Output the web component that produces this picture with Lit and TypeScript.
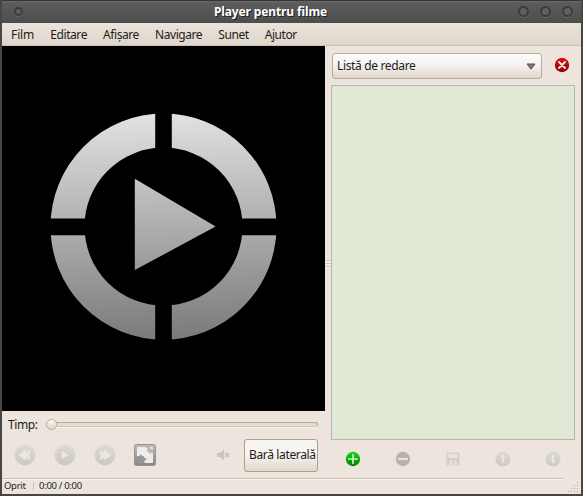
import { LitElement, html, css, svg } from "lit";
import { customElement } from "lit/decorators.js";

const disc = (id: string, glyph: unknown, size = 22) => html`
  <svg width=${size} height=${size} viewBox="0 0 22 22">
    <defs>
      <linearGradient id=${id} x1="0" y1="0" x2="0" y2="1">
        <stop offset="0" stop-color="#dedad4" /><stop offset="1" stop-color="#cbc8c1" />
      </linearGradient>
    </defs>
    <circle cx="11" cy="11" r="10.4" fill="url(#${id})" />
    ${glyph}
  </svg>`;

@customElement("app-root")
export class AppRoot extends LitElement {
  static styles = css`
    :host { display: block; width: 583px; height: 496px; font: 12px/18px "Noto Sans", "Open Sans", sans-serif; color: #1c1c1c; }
    * { box-sizing: border-box; }
    svg { display: block; flex: none; }
    .window { width: 583px; height: 496px; display: flex; flex-direction: column; background: #ece4dd; border: 2px solid #474645; border-top: 0; overflow: hidden; position: relative; white-space: nowrap; }
    .title { height: 23px; flex: none; display: grid; grid-template-columns: 38px 1fr 80px; align-items: center; background: linear-gradient(#353535 0, #353535 1px, #686868 1px, #5b5b5b 3px, #4d4d4d); color: #fff; }
    .title b { text-align: center; letter-spacing: -0.12px; text-shadow: 1px 1px 0 #222; }
    .dots { display: flex; gap: 11px; padding-left: 12px; }
    .dots.end { padding: 0 8px 0 0; justify-content: flex-end; }
    .dot { width: 11px; height: 11px; border-radius: 50%; border: 2px solid #3b3b3b; background: #606060; box-shadow: 0 1px 0 #686868; }
    .dot.small { width: 9px; height: 9px; }
    .menu { height: 23px; flex: none; display: flex; gap: 16px; padding: 3px 0 0 9px; background: linear-gradient(#eae3da, #dfd7cb); border-bottom: 1px solid #c9c0ad; }
    .menu span { letter-spacing: -0.42px; }
    .menu span:first-child { letter-spacing: -0.1px; }
    .body { display: flex; height: 432px; flex: none; }
    .left { width: 323px; display: flex; flex-direction: column; }
    .video { height: 365px; background: #000; }
    .seek { height: 27px; display: flex; align-items: center; padding-left: 6px; }
    .seek span { width: 38px; letter-spacing: -0.4px; }
    .track { width: 272px; height: 5px; border: 1px solid #b5ab9b; border-bottom-color: #cfc7b8; border-radius: 3px; background: #e4dcd1; box-shadow: 0 1px 0 #f6f1ea; display: flex; align-items: center; }
    .knob { width: 11px; height: 11px; flex: none; margin-left: -1px; border: 1px solid #b6ad9d; border-radius: 50%; background: linear-gradient(#fbf8f5, #ded6cb); }
    .controls { display: flex; align-items: center; height: 34px; padding-left: 12px; }
    .controls .group { display: flex; gap: 18px; width: 203px; align-items: center; }
    .side { margin-left: 14px; width: 74px; height: 33px; border: 1px solid #aca18e; border-radius: 3px; background: linear-gradient(#f7f5f3, #f7f4f1 45%, #e0d7cc); display: flex; align-items: center; padding-left: 4px; letter-spacing: -0.36px; }
    .split { width: 6px; display: flex; flex-direction: column; justify-content: center; align-items: center; gap: 1px; padding-top: 3px; }
    .split i { width: 5px; height: 2px; background: #d0c3b5; border-bottom: 1px solid #f7f2ee; }
    .right { width: 250px; display: flex; flex-direction: column; }
    .pick { display: flex; align-items: center; padding: 7px 0 0 1px; height: 33px; }
    .pick > svg { margin-top: -2px; }
    .combo { width: 210px; height: 26px; border: 1px solid #b7ad9c; border-radius: 3px; background: linear-gradient(#fdfcfc, #f5f1ee 50%, #dfd6cc); display: flex; align-items: center; justify-content: space-between; padding: 0 5px 0 4px; margin-right: 12px; letter-spacing: -0.35px; }
    .list { margin-top: 6px; width: 244px; height: 355px; border: 1px solid #b5b7b4; background: #e0e8d6; }
    .tools { display: flex; gap: 34px; padding: 11px 0 0 14px; }
    .status { height: 16px; flex: none; width: 561px; border-top: 1px solid #c9c1b3; box-shadow: inset 0 1px 0 #f7f2ec; display: flex; align-items: center; font-size: 9.5px; line-height: 14px; letter-spacing: -0.3px; padding: 0 0 1px 2px; }
    .status span { width: 29px; letter-spacing: -0.3px; }
    .status i { width: 1px; height: 8px; background: #c9c1b4; margin-right: 5px; }
    .grip { position: absolute; right: 1px; bottom: 0; }
  `;

  private logo() {
    return html`<svg width="323" height="365" viewBox="2 46 323 365">
      <defs><linearGradient id="metal" gradientUnits="userSpaceOnUse" x1="160" y1="113" x2="166" y2="340">
        <stop offset="0" stop-color="#e2e2e2" /><stop offset="1" stop-color="#7a7a7a" />
      </linearGradient>
      <filter id="soft" color-interpolation-filters="sRGB"><feGaussianBlur stdDeviation=".7" /></filter></defs>
      <g filter="url(#soft)">
        <circle cx="163.5" cy="226.6" r="96" fill="none" stroke="url(#metal)" stroke-width="34" />
        <path d="M155.2 105h16.6v245h-16.6zM45 218.4h237v16.8H45z" fill="#000" />
        <path d="M134.8 178.8L215.6 226.6L134.8 270z" fill="url(#metal)" />
      </g>
    </svg>`;
  }

  render() {
    return html`<div class="window">
      <div class="title">
        <div class="dots"><i class="dot small"></i></div>
        <b>Player pentru filme</b>
        <div class="dots end"><i class="dot"></i><i class="dot"></i><i class="dot"></i></div>
      </div>
      <div class="menu">${["Film", "Editare", "Afișare", "Navigare", "Sunet", "Ajutor"].map((m) => html`<span>${m}</span>`)}</div>
      <div class="body">
        <div class="left">
          <div class="video">${this.logo()}</div>
          <div class="seek"><span>Timp:</span><div class="track"><i class="knob"></i></div></div>
          <div class="controls">
            <div class="group">
              ${disc("g1", svg`<path d="M4.500 11L12 5.500v3l4-2.500v3.500L14.500 11l1.500 1.500V16l-4-2.500v3z" fill="#ece6df"/>`)}
              ${disc("g2", svg`<path d="M7 5.500L16 11l-9 5.500z" fill="#ece6df" stroke="#bfbbb4" stroke-width=".6"/>`)}
              ${disc("g3", svg`<path d="M17.500 11L10 5.500v3L6 6v3.500L7.500 11 6 12.500V16l4-2.500v3z" fill="#ece6df"/>`)}
              <svg width="22" height="22" viewBox="0 0 22 22">
                <defs><linearGradient id="pz" x1="0" y1="0" x2="0" y2="1"><stop offset="0" stop-color="#bdbdbc"/><stop offset="1" stop-color="#858786"/></linearGradient></defs>
                <rect x=".5" y=".5" width="21" height="21" rx="2" fill="url(#pz)" stroke="#929392"/>
                <path d="M3 3h16v16H3z" fill="#f1ece7"/>
                <path d="M3 12h2.500l.5-1.500 2 .5-.5 1.500 2.500-.5.500 2.500 1.500-.5.500 2-2 .5V19H3z" fill="#969796"/>
                <path d="M12 3h7v6.500l-1.500-1L16.500 10l-1.500-1 .5-1.500-2.500.5-.5-1.500 1.500-1z" fill="#b5b5b4"/>
                <path d="M15 3h4v3l-2-1z" fill="#e2dfdb"/>
              </svg>
            </div>
            <svg width="13" height="12" viewBox="0 0 13 12"><path d="M0 4h3l4-3.500v11L3 8H0z" fill="#c9c5bf"/><path d="M8 4l4 4M12 4L8 8" stroke="#c9c5bf" stroke-width="1.800"/></svg>
            <div class="side">Bară laterală</div>
          </div>
        </div>
        <div class="split"><i></i><i></i><i></i></div>
        <div class="right">
          <div class="pick">
            <div class="combo">Listă de redare
              <svg width="10" height="7" viewBox="0 0 10 7"><path d="M1 1h8L5 6.200z" fill="#827d76" stroke="#55514c"/></svg>
            </div>
            <svg width="16" height="16" viewBox="0 0 16 16">
              <defs><linearGradient id="red" x1="0" y1="0" x2="0" y2="1"><stop offset="0" stop-color="#dc1414"/><stop offset="1" stop-color="#860000"/></linearGradient></defs>
              <circle cx="8" cy="8" r="7.200" fill="url(#red)"/><path d="M5 5l6 6M11 5l-6 6" stroke="#f3e6e4" stroke-width="1.900" stroke-linecap="round"/>
            </svg>
          </div>
          <div class="list"></div>
          <div class="tools">
            <svg width="16" height="16" viewBox="0 0 16 16">
              <defs><linearGradient id="green" x1="0" y1="0" x2="0" y2="1"><stop offset="0" stop-color="#12dc12"/><stop offset="1" stop-color="#067c06"/></linearGradient></defs>
              <circle cx="8" cy="8" r="7.200" fill="url(#green)"/><path d="M3.800 8h8.400M8 3.800v8.400" stroke="#d5edd0" stroke-width="1.700" stroke-linecap="round"/>
            </svg>
            <svg width="16" height="16" viewBox="0 0 16 16"><circle cx="8" cy="8" r="7.200" fill="#b9b0aa"/><path d="M3 8h10" stroke="#e7dfd8" stroke-width="2.200"/></svg>
            <svg width="16" height="16" viewBox="0 0 16 16"><path d="M1.500 1.500h12L14.500 3v11.500h-13z" fill="#d4d0c9"/><path d="M3.500 3h9v4h-9zM5 9.500h2.500V14H5zM9.500 9.500h2V14h-2z" fill="#ebe4dd"/></svg>
            ${disc("g4", svg`<path d="M11 4.500L14.500 8.500H12.500v7.500h-3V8.500H7.500z" fill="#ece6df"/>`, 16)}
            ${disc("g5", svg`<path d="M11 17.500L14.500 13.500H12.500V6h-3v7.500H7.500z" fill="#ece6df"/>`, 16)}
          </div>
        </div>
      </div>
      <div class="status"><span>Oprit</span><i></i>0:00 / 0:00</div>
      <svg class="grip" width="12" height="12" viewBox="0 0 12 12">${[0, 1, 2, 3].map((r) =>
        [0, 1, 2, 3].filter((c) => c + r >= 3).map((c) => svg`<rect x=${c * 3} y=${r * 3} width="1.500" height="1.500" fill="#c4baad"/><rect x=${c * 3 + 1} y=${r * 3 + 1} width="1" height="1" fill="#faf6f1"/>`))}</svg>
    </div>`;
  }
}
